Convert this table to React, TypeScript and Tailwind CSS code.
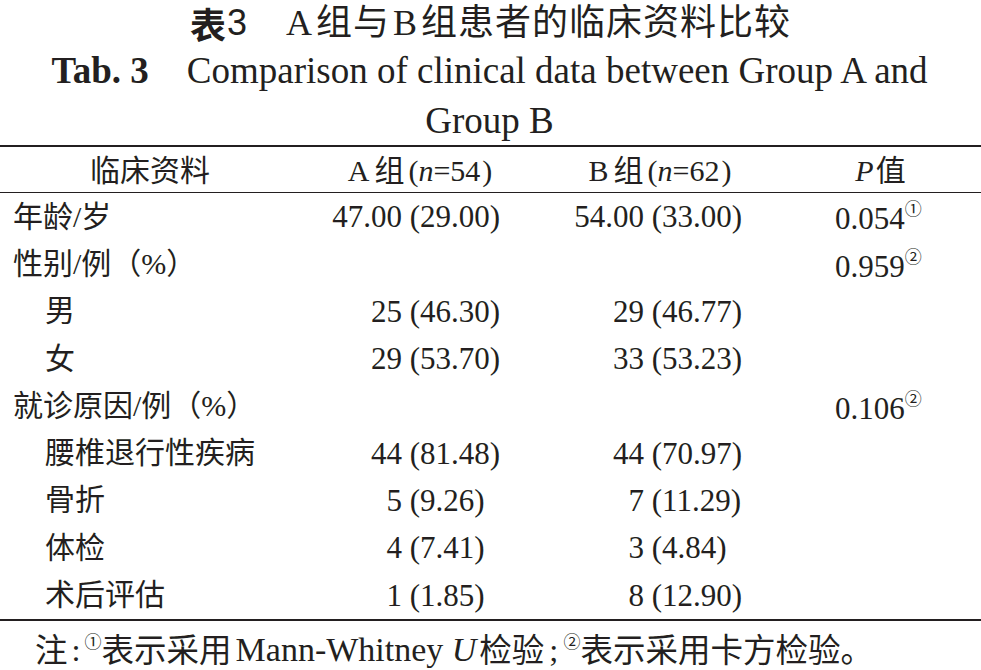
const serif = { fontFamily: '"Liberation Serif", "Noto Sans CJK SC", serif' };
const cjk = { fontFamily: '"Noto Sans CJK SC", sans-serif' };

type Row = {
  label: string;
  sub?: boolean;
  a?: [string, string];
  b?: [string, string];
  p?: string;
  mark?: string;
};

const rows: Row[] = [
  { label: '年龄/岁', a: ['47.00', '(29.00)'], b: ['54.00', '(33.00)'], p: '0.054', mark: '①' },
  { label: '性别/例（%）', p: '0.959', mark: '②' },
  { label: '男', sub: true, a: ['25', '(46.30)'], b: ['29', '(46.77)'] },
  { label: '女', sub: true, a: ['29', '(53.70)'], b: ['33', '(53.23)'] },
  { label: '就诊原因/例（%）', p: '0.106', mark: '②' },
  { label: '腰椎退行性疾病', sub: true, a: ['44', '(81.48)'], b: ['44', '(70.97)'] },
  { label: '骨折', sub: true, a: ['5', '(9.26)'], b: ['7', '(11.29)'] },
  { label: '体检', sub: true, a: ['4', '(7.41)'], b: ['3', '(4.84)'] },
  { label: '术后评估', sub: true, a: ['1', '(1.85)'], b: ['8', '(12.90)'] },
];

function Mark({ children }: { children: string }) {
  return (
    <span className="text-[17px] align-[0.8em] leading-none" style={cjk}>
      {children}
    </span>
  );
}

function Value({ v, left }: { v?: [string, string]; left: string }) {
  if (!v) return null;
  return (
    <div className="flex text-[31px] leading-none">
      <span className={`${left} text-right`}>{v[0]}</span>
      <span className="whitespace-pre"> {v[1]}</span>
    </div>
  );
}

export default function App() {
  return (
    <div className="w-[981px] h-[670px] bg-white text-[#231f20]" style={serif}>
      {/* caption */}
      <div className="flex flex-col items-center">
        <div className="h-[46px] flex items-center text-[36px] leading-[46px] tracking-[1px]">
          <span className="font-bold" style={cjk}>表</span>
          <span style={{ fontFamily: '"Liberation Sans", sans-serif' }}>3</span>
          <span className="ml-[38px]">A</span>
          <span className="ml-[3px]">组与</span>
          <span className="ml-[3px]">B</span>
          <span className="ml-[3px]">组患者的临床资料比较</span>
        </div>
        <div className="h-[50px] flex items-center text-[37px] leading-[50px] pr-[2px]">
          <span className="font-bold">Tab. 3</span>
          <span className="ml-[38px]">Comparison of clinical data between Group A and</span>
        </div>
        <div className="h-[49px] flex items-center text-[37px] leading-[49px] pr-[2px]">Group B</div>
      </div>

      {/* table */}
      <div className="border-t-[2.5px] border-b-[2.5px] border-[#231f20]">
        <div className="flex h-[46px] items-center border-b border-[#231f20] text-[30px] leading-none pt-[3px]">
          <div className="w-[300px] text-center">临床资料</div>
          <div className="w-[240px] text-center">
            A<span className="ml-[5px]">组</span>
            <span className="ml-[4px]">(</span>
            <i>n</i>=54<span className="ml-[2px]">)</span>
          </div>
          <div className="w-[240px] text-center">
            B<span className="ml-[5px]">组</span>
            <span className="ml-[4px]">(</span>
            <i>n</i>=62<span className="ml-[2px]">)</span>
          </div>
          <div className="flex-1 text-center">
            <i>P</i>
            <span className="ml-[2px]">值</span>
          </div>
        </div>
        {rows.map((r) => (
          <div key={r.label} className="flex h-[47.3px] items-center">
            <div className={`w-[300px] text-[30px] leading-none ${r.sub ? 'pl-[45px]' : 'pl-[13px]'}`}>{r.label}</div>
            <div className="w-[240px]">
              <Value v={r.a} left="w-[102px]" />
            </div>
            <div className="w-[240px]">
              <Value v={r.b} left="w-[104px]" />
            </div>
            <div className="flex-1 pl-[55px] text-[31px] leading-none">
              {r.p}
              {r.mark && <Mark>{r.mark}</Mark>}
            </div>
          </div>
        ))}
      </div>

      {/* note */}
      <p className="pl-[35px] pt-[11px] text-[32.5px] leading-none whitespace-nowrap">
        注<span className="mx-[4px]">:</span>
        <Mark>①</Mark>表示采用<span className="text-[34px] ml-[4px] mr-[3px]">Mann-Whitney <i>U</i></span>检验
        <span className="mx-[5px]">;</span>
        <Mark>②</Mark>表示采用卡方检验。
      </p>
    </div>
  );
}
